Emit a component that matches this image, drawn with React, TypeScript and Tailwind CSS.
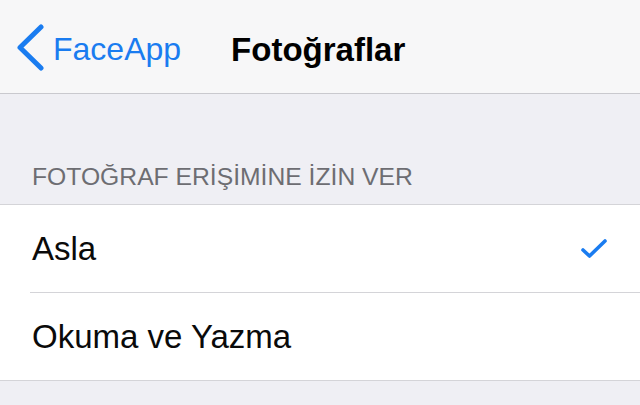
import React from "react";

export default function App() {
  return (
    <div
      className="w-[640px] h-[405px] overflow-hidden bg-[#efeff4] flex flex-col"
      style={{ fontFamily: '"Liberation Sans", Arial, sans-serif' }}
    >
      <div className="h-[94px] bg-[#f7f7f8] border-b border-[#c9c9ce] flex items-center pt-[5px] shrink-0">
        <div className="flex items-center">
          <svg width="30" height="50" viewBox="0 0 30 50" className="ml-[14px] mb-[2px]">
            <path d="M27 4 L6 24.5 L27 45" fill="none" stroke="#1a7cf0" strokeWidth="5" strokeLinecap="round" strokeLinejoin="round" />
          </svg>
          <span className="text-[32px] leading-[32px] text-[#1a7cf0] ml-[9px]">FaceApp</span>
        </div>
        <span className="text-[33px] leading-[33px] font-bold text-black ml-[50px]">Fotoğraflar</span>
      </div>
      <div className="h-[110px] flex flex-col justify-end pb-[15px] pl-[32px] shrink-0">
        <span className="text-[24.7px] leading-[25px] text-[#6d6d72]">FOTOĞRAF ERİŞİMİNE İZİN VER</span>
      </div>
      <div className="bg-white border-t border-b border-[#d4d4d8] shrink-0">
        <div className="h-[87px] flex items-center justify-between pl-[32px] pr-[32px]">
          <span className="text-[33px] leading-[33px] text-[#0a0a0a]">Asla</span>
          <svg width="28" height="22" viewBox="0 0 28 22">
            <path d="M3 12 L9.5 18 L25 3" fill="none" stroke="#1a7cf0" strokeWidth="3.6" strokeLinecap="round" strokeLinejoin="round" />
          </svg>
        </div>
        <div className="ml-[30px] h-px bg-[#d4d4d8]" />
        <div className="h-[87px] flex items-center pl-[32px]">
          <span className="text-[33px] leading-[33px] text-[#0a0a0a]">Okuma ve Yazma</span>
        </div>
      </div>
    </div>
  );
}
